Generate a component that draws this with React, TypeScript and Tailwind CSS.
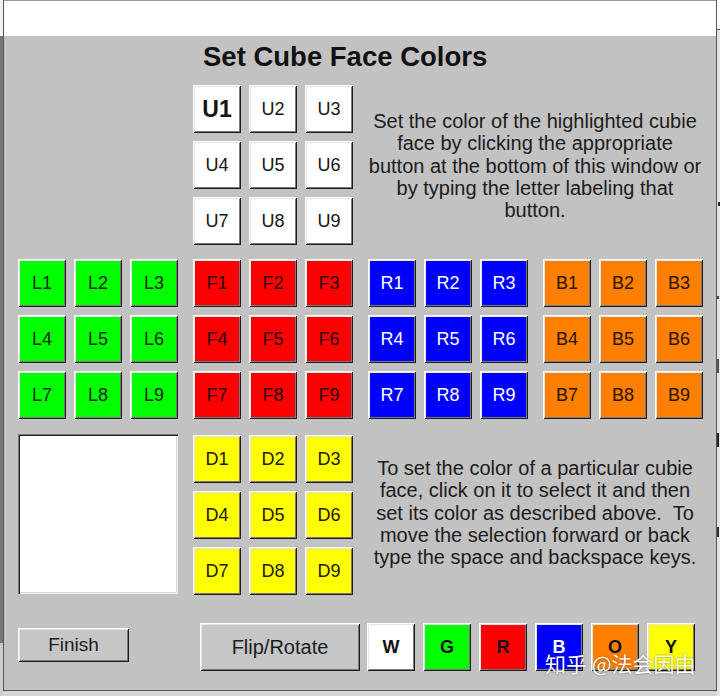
const font = "font-['Liberation_Sans',Arial,sans-serif]";

const bevel =
  "shadow-[inset_1px_1px_0_#ffffff,inset_-1px_-1px_0_#1a1a1a,inset_2px_2px_0_#e6e6e6,inset_-2px_-2px_0_#7a7a7a]";

const faces: Record<string, string> = {
  U: "bg-white text-[#141414]",
  L: "bg-[#00ff00] text-[#142814]",
  F: "bg-[#ff0000] text-[#2a0000]",
  R: "bg-[#0000ff] text-white",
  B: "bg-[#ff8000] text-[#2a1400]",
  D: "bg-[#ffff00] text-[#1a1a00]",
};

const palette = [
  { key: "W", cls: "bg-white text-[#111]" },
  { key: "G", cls: "bg-[#00ff00] text-[#111]" },
  { key: "R", cls: "bg-[#ff0000] text-[#111]" },
  { key: "B", cls: "bg-[#0000ff] text-white" },
  { key: "O", cls: "bg-[#ff8000] text-[#111]" },
  { key: "Y", cls: "bg-[#ffff00] text-[#111]" },
];

function Face({ face, selected }: { face: string; selected?: number }) {
  return (
    <div className="grid w-[160px] grid-cols-3 gap-2">
      {[1, 2, 3, 4, 5, 6, 7, 8, 9].map((n) => (
        <button
          key={n}
          className={`flex h-12 w-12 items-center justify-center ${bevel} ${faces[face]} ${
            selected === n ? "text-[23px] font-bold" : "text-[18px]"
          }`}
        >
          {face}
          {n}
        </button>
      ))}
    </div>
  );
}

function Lines({ lines, className }: { lines: string[]; className: string }) {
  return (
    <div className={`w-[334px] text-center text-[20px] leading-[22.25px] text-[#1c1c1c] ${className}`}>
      {lines.map((l) => (
        <div key={l} className="whitespace-pre">
          {l}
        </div>
      ))}
    </div>
  );
}

export default function App() {
  return (
    <div className={`relative flex h-[696px] w-[720px] overflow-hidden bg-[#d4d4d4] ${font}`}>
      {/* app behind, left edge */}
      <div className="flex w-[3px] flex-col">
        <div className="h-[36px] bg-[#f2f2f2]" />
        <div className="h-[607px] bg-[#767676]" />
        <div className="flex-1 bg-[#cdcdcd]" />
      </div>

      {/* dialog */}
      <div className="flex h-[691px] w-[714px] flex-col border-x border-b border-[#555]">
        <div className="h-[36px] border-t border-[#9a9a9a] bg-white" />

        <div className="flex flex-1 flex-col bg-[#c2c2c2] pl-[14px]">
          <h1 className="mt-[6px] pl-[185px] text-[27.5px] leading-[30px] font-bold text-[#111]">
            Set Cube Face Colors
          </h1>

          <div className="mt-[13px] flex">
            <div className="ml-[175px]">
              <Face face="U" selected={1} />
            </div>
            <Lines
              className="ml-[15px] pt-[25px]"
              lines={[
                "Set the color of the highlighted cubie",
                "face by clicking the appropriate",
                "button at the bottom of this window or",
                "by typing the letter labeling that",
                "button.",
              ]}
            />
          </div>

          <div className="mt-[14px] flex gap-[15px]">
            <Face face="L" />
            <Face face="F" />
            <Face face="R" />
            <Face face="B" />
          </div>

          <div className="mt-[15px] flex">
            <div className="h-[160px] w-[160px] bg-white shadow-[inset_1px_1px_0_#7a7a7a,inset_2px_2px_0_#1e1e1e,inset_-1px_-1px_0_#f2f2f2,inset_-2px_-2px_0_#d8d8d8]" />
            <div className="ml-[15px] mt-px">
              <Face face="D" />
            </div>
            <Lines
              className="ml-[15px] pt-[23px]"
              lines={[
                "To set the color of a particular cubie",
                "face, click on it to select it and then",
                "set its color as described above.  To",
                "move the selection forward or back",
                "type the space and backspace keys.",
              ]}
            />
          </div>

          <div className="mt-[28px] flex items-start">
            <button
              className={`mt-[5px] h-[34px] w-[111px] bg-[#c6c6c6] text-[19px] text-[#1c1c1c] ${bevel}`}
            >
              Finish
            </button>
            <button
              className={`ml-[71px] h-12 w-[160px] bg-[#c6c6c6] text-[20px] text-[#1c1c1c] ${bevel}`}
            >
              Flip/Rotate
            </button>
            <div className="ml-[7px] flex gap-2">
              {palette.map((p) => (
                <button
                  key={p.key}
                  className={`flex h-12 w-12 items-center justify-center text-[18px] font-bold ${bevel} ${p.cls}`}
                >
                  {p.key}
                </button>
              ))}
            </div>
          </div>
        </div>
      </div>

      {/* app behind, right edge */}
      <div className="flex flex-1 flex-col bg-[#e4e4e4]">
        <div className="h-[30px] border-b border-[#555] bg-white" />
        <div className="mt-[172px] ml-px h-[4px] w-[2px] bg-[#222]" />
        <div className="mt-[90px] h-[3px] w-[2px] bg-[#444]" />
        <div className="mt-[60px] h-[14px] w-[2px] bg-[#555]" />
        <div className="mt-[60px] h-[14px] w-[2px] bg-[#222]" />
        <div className="mt-[80px] h-[10px] w-[2px] bg-[#334]" />
      </div>

      {/* watermark */}
      <div className="absolute left-[545px] top-[649px] whitespace-pre font-['Noto_Sans_CJK_SC',sans-serif] text-[21px] leading-[28px] text-white [text-shadow:0_0_2px_rgba(0,0,0,0.55)]">
        知乎 @法会因由
      </div>
    </div>
  );
}
